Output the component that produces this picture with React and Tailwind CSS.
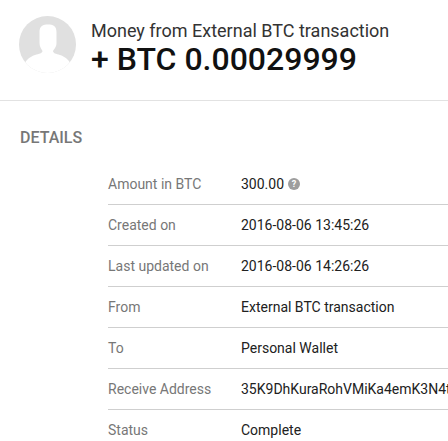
import React from "react";

const rows = [
  { label: "Amount in BTC", value: "300.00", help: true },
  { label: "Created on", value: "2016-08-06 13:45:26" },
  { label: "Last updated on", value: "2016-08-06 14:26:26" },
  { label: "From", value: "External BTC transaction" },
  { label: "To", value: "Personal Wallet" },
  { label: "Receive Address", value: "35K9DhKuraRohVMiKa4emK3N4t8Xd2Qp" },
  { label: "Status", value: "Complete" },
];

function Avatar() {
  return (
    <svg width="57" height="57" viewBox="0 0 57 57">
      <defs>
        <clipPath id="av">
          <circle cx="28.5" cy="28.5" r="28.5" />
        </clipPath>
      </defs>
      <circle cx="28.5" cy="28.5" r="28.5" fill="#e0e0e0" />
      <g clipPath="url(#av)" fill="#ffffff">
        <path d="M20.5 16 C20.5 10 24 8.5 29 8.5 C34 8.5 37.5 10 37.5 16 L37.5 27 C37.5 31 35 33 34 35 C34 37 37 38 41 39 C47 41 51 45 53 51 L53 60 L4 60 L4 51 C6 45 10 41 16 39 C20 38 23.5 37 23.5 35 C22.5 33 20.5 31 20.5 27 Z" />
      </g>
    </svg>
  );
}

export default function App() {
  return (
    <div className="w-[448px] h-[441px] overflow-hidden bg-white font-['Roboto',sans-serif]">
      <div className="h-[100px] flex items-start">
        <div className="ml-[19px] mt-[16px] w-[57px] h-[57px]">
          <Avatar />
        </div>
        <div className="ml-[15px] mt-[21px] flex flex-col whitespace-nowrap">
          <div className="text-[18px] leading-[20px] text-[#333333]">Money from External BTC transaction</div>
          <div className="text-[32px] leading-[36px] font-medium text-[#111111]">+ BTC 0.00029999</div>
        </div>
      </div>
      <div className="h-px bg-[#e2e2e2]" />
      <div className="mt-[27px] ml-[20px] text-[16px] leading-[20px] font-medium text-[#777777]">DETAILS</div>
      <div className="mt-[16px] ml-[108px]">
        {rows.map((r) => (
          <div key={r.label}>
            <div className="flex h-[40px] text-[14px] leading-[40px] whitespace-nowrap">
              <div className="w-[133px] shrink-0 text-[#777777]">{r.label}</div>
              <div className="flex items-center text-[#212121]">
                {r.value}
                {r.help && (
                  <span className="ml-[4px] w-[12px] h-[12px] rounded-full bg-[#9e9e9e] text-white text-[9px] leading-[12px] font-bold text-center">?</span>
                )}
              </div>
            </div>
            <div className="h-px bg-[#cfcfcf]" />
          </div>
        ))}
      </div>
    </div>
  );
}
